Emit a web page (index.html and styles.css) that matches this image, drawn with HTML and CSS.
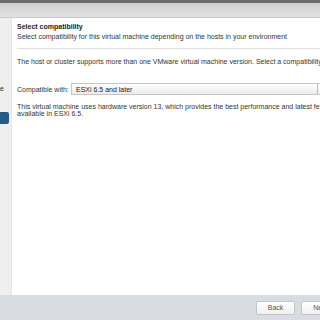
FILE: index.html
```html
<!DOCTYPE html>
<html>
<head>
<meta charset="utf-8">
<link rel="stylesheet" href="styles.css">
</head>
<body>
<div class="app">
  <div class="topbar"></div>
  <div class="header"></div>
  <div class="main">
    <div class="sidebar">
      <div class="side-item">1c Select storage</div>
      <div class="side-active"></div>
    </div>
    <div class="content">
      <div class="title">Select compatibility</div>
      <div class="subtitle">Select compatibility for this virtual machine depending on the hosts in your environment</div>
      <div class="sep"></div>
      <div class="para">The host or cluster supports more than one VMware virtual machine version. Select a compatibility for the virtual machine.</div>
      <div class="row">
        <span class="label">Compatible with:</span>
        <div class="select"><span class="select-text">ESXi 6.5 and later</span><span class="select-btn"></span></div>
      </div>
      <div class="info">This virtual machine uses hardware version 13, which provides the best performance and latest features<br>available in ESXi 6.5.</div>
    </div>
  </div>
  <div class="footer">
    <button class="btn">Back</button>
    <button class="btn">Next</button>
  </div>
</div>
</body>
</html>
```
FILE: styles.css
```css
html, body { margin: 0; padding: 0; }
body { width: 320px; height: 320px; overflow: hidden; font-family: "Liberation Sans", Arial, sans-serif; font-size: 7px; color: #333; background: #fff; }
.app { display: flex; flex-direction: column; height: 320px; }
.topbar { height: 3px; background: #6a6a6a; flex: none; }
.header { height: 14px; background: linear-gradient(#cfcfcf, #e2e2e2); border-bottom: 1px solid #c8c8c8; flex: none; }
.main { flex: 1; display: flex; min-height: 0; }
.sidebar { width: 11px; background: #efefef; border-right: 1px solid #e4e4e4; flex: none; overflow: hidden; position: relative; }
.side-item { position: absolute; right: 7px; top: 67px; white-space: nowrap; color: #333; }
.side-active { position: absolute; left: -4px; top: 94px; width: 13px; height: 12px; background: #235a8a; border-radius: 2px; }
.content { flex: 1; padding: 4px 0 0 5px; overflow: hidden; }
.title { font-weight: bold; color: #222; line-height: 9px; white-space: nowrap; }
.subtitle { line-height: 9px; margin-top: 1px; white-space: nowrap; color: #333; }
.sep { height: 1px; background: #e2e2e2; margin-top: 7px; }
.para { margin-top: 8px; line-height: 9px; white-space: nowrap; }
.row { display: flex; align-items: center; margin-top: 17px; }
.label { width: 54px; flex: none; white-space: nowrap; }
.select { flex: 1; height: 10px; border: 1px solid #c6c6c6; border-right: none; background: linear-gradient(#ffffff, #ebebeb); display: flex; align-items: center; }
.select-text { flex: 1; padding-left: 4px; color: #222; white-space: nowrap; }
.select-btn { width: 2px; height: 10px; border-left: 1px solid #bdbdbd; flex: none; }
.info { margin-top: 8px; line-height: 7px; white-space: nowrap; }
.footer { height: 25px; background: #d9dde3; flex: none; display: flex; align-items: center; padding-left: 256px; gap: 6px; }
.btn { font-family: "Liberation Sans", Arial, sans-serif; font-size: 7px; color: #555; height: 14px; width: 39px; padding: 0; border: 1px solid #c3c5c8; border-radius: 2px; background: linear-gradient(#ffffff, #f0f0f0); flex: none; }
```
